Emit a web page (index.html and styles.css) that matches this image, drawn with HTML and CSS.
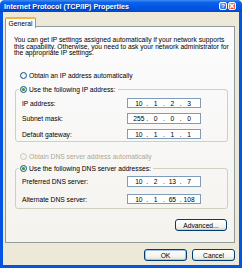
FILE: index.html
```html
<!DOCTYPE html>
<html>
<head>
<meta charset="utf-8">
<link rel="stylesheet" href="styles.css">
</head>
<body>
<div class="window">
  <div class="titlebar">
    <span class="title">Internet Protocol (TCP/IP) Properties</span>
    <div class="tb-buttons">
      <span class="tb help">?</span>
      <span class="tb close"><svg width="6" height="6" viewBox="0 0 6 6"><path d="M1 1L5 5M5 1L1 5" stroke="#fff" stroke-width="1.4"/></svg></span>
    </div>
  </div>
  <div class="frame">
    <div class="tabs"><div class="tab">General</div></div>
    <div class="panel">
      <p class="desc">You can get IP settings assigned automatically if your network supports<br>this capability. Otherwise, you need to ask your network administrator for<br>the appropriate IP settings.</p>
      <div class="opt r1"><span class="radio"></span>Obtain an IP address automatically</div>
      <fieldset class="group g1">
        <legend><span class="radio on"></span>Use the following IP address:</legend>
        <div class="rows">
          <span class="label">IP address:</span>
          <div class="ip"><span>10</span><i>.</i><span>1</span><i>.</i><span>2</span><i>.</i><span>3</span></div>
          <span class="label">Subnet mask:</span>
          <div class="ip"><span>255</span><i>.</i><span>0</span><i>.</i><span>0</span><i>.</i><span>0</span></div>
          <span class="label">Default gateway:</span>
          <div class="ip"><span>10</span><i>.</i><span>1</span><i>.</i><span>1</span><i>.</i><span>1</span></div>
        </div>
      </fieldset>
      <div class="opt r2 disabled"><span class="radio"></span>Obtain DNS server address automatically</div>
      <fieldset class="group g2">
        <legend><span class="radio on"></span>Use the following DNS server addresses:</legend>
        <div class="rows">
          <span class="label">Preferred DNS server:</span>
          <div class="ip"><span>10</span><i>.</i><span>2</span><i>.</i><span>13</span><i>.</i><span>7</span></div>
          <span class="label">Alternate DNS server:</span>
          <div class="ip"><span>10</span><i>.</i><span>1</span><i>.</i><span>65</span><i>.</i><span>108</span></div>
        </div>
      </fieldset>
      <div class="adv-row"><button class="btn adv">Advanced...</button></div>
    </div>
    <div class="footer">
      <button class="btn default">OK</button>
      <button class="btn">Cancel</button>
    </div>
  </div>
</div>
</body>
</html>
```

FILE: styles.css
```css
* { box-sizing: border-box; margin: 0; padding: 0; }
html, body { margin: 0; width: 242px; height: 268px; overflow: hidden; background: #fff; }
body { font-family: "Liberation Sans", Arial, sans-serif; font-size: 6.7px; color: #000; }

.window { width: 242px; height: 268px; display: flex; flex-direction: column; border-radius: 5px 5px 0 0; overflow: hidden; background: #0553E1; }

.titlebar {
  height: 12px; flex: none; display: flex; align-items: center; justify-content: space-between;
  padding: 0 6px 0 4px;
  background: linear-gradient(#3E8DF5 0%, #0E62EA 20%, #0157E6 55%, #0250DA 85%, #0343C4 100%);
}
.title { color: #fff; font-weight: bold; font-size: 7.2px; text-shadow: 1px 1px 0 #0A2F8C; white-space: nowrap; }
.tb-buttons { display: flex; gap: 1px; }
.tb { width: 8px; height: 8px; border: 1px solid #fff; border-radius: 2px; display: flex; align-items: center; justify-content: center; color: #fff; font-weight: bold; font-size: 6px; line-height: 1; }
.help { background: linear-gradient(135deg, #6FA2FA, #2463E4); }
.close { background: linear-gradient(135deg, #F08A6A, #D6401E); }

.frame { flex: 1; display: flex; flex-direction: column; margin: 0 3px 3px; background: #ECE9D8; padding: 5px 4px 0 2px; }

.tabs { display: flex; height: 10px; position: relative; z-index: 1; margin-bottom: -1px; }
.tab { width: 31px; height: 11px; border: 1px solid #919B9C; border-bottom: none; border-top: 2px solid #F2B646; border-radius: 2px 2px 0 0; background: #FCFCFE; display: flex; align-items: center; justify-content: center; padding-bottom: 1px; }

.panel { height: 217px; border: 1px solid #919B9C; background: linear-gradient(#FCFCFE, #F4F3EE); display: flex; flex-direction: column; padding: 10px 6px 0 8px; }

.desc { line-height: 6.6px; white-space: nowrap; }

.opt { display: flex; align-items: center; height: 8px; margin-left: 6px; gap: 2px; white-space: nowrap; }
.r1 { margin-top: 15px; }
.r2 { margin-top: 10px; }
.disabled { color: #ACA899; }
.disabled .radio { border-color: #CAC8BB; background: #F4F3EE; }

.radio { width: 7px; height: 7px; border-radius: 50%; border: 1px solid #1C5180; background: radial-gradient(circle at 60% 60%, #fff, #DCDCD4); display: inline-flex; align-items: center; justify-content: center; flex: none; }
.radio.on::after { content: ""; width: 3px; height: 3px; border-radius: 50%; background: #21A121; }

.group { border: 1px solid #D0D0BF; border-radius: 3px; margin: 6px 0 0 1px; width: 213px; padding: 0; }
.group legend { display: flex; align-items: center; gap: 2px; height: 8px; margin-left: 3px; padding: 0 2px 0 1px; white-space: nowrap; }
.rows { display: grid; grid-template-columns: 105px 74px; align-items: center; row-gap: 5px; padding: 4px 6px 3px 6px; }
.g1 .rows { padding-bottom: 2px; }
.g2 { margin-top: 4px; }
.g2 .rows { row-gap: 7px; padding-bottom: 4px; }

.ip { height: 10.5px; border: 1px solid #7F9DB9; background: #fff; display: flex; align-items: center; padding: 0 4px; }
.ip span { flex: 1; text-align: center; }
.ip i { font-style: normal; width: 3px; text-align: center; }

.adv-row { display: flex; justify-content: flex-end; margin-top: 10px; padding-right: 1px; }

.btn { font-family: inherit; font-size: 6.7px; color: #000; height: 12px; border: 1px solid #003C74; border-radius: 3px; background: linear-gradient(#FFFFFF, #F5F4EF 60%, #E3E1D6); box-shadow: inset 0 -1px 0 #D6D0C5; cursor: default; }
.adv { width: 52px; }
.footer { display: flex; justify-content: flex-end; gap: 5px; margin-top: 6px; }
.footer .btn { width: 43px; }
.btn.default { box-shadow: inset 0 0 0 1px #A6C4F2, inset 0 -1px 0 #8FB0EC; }
```
